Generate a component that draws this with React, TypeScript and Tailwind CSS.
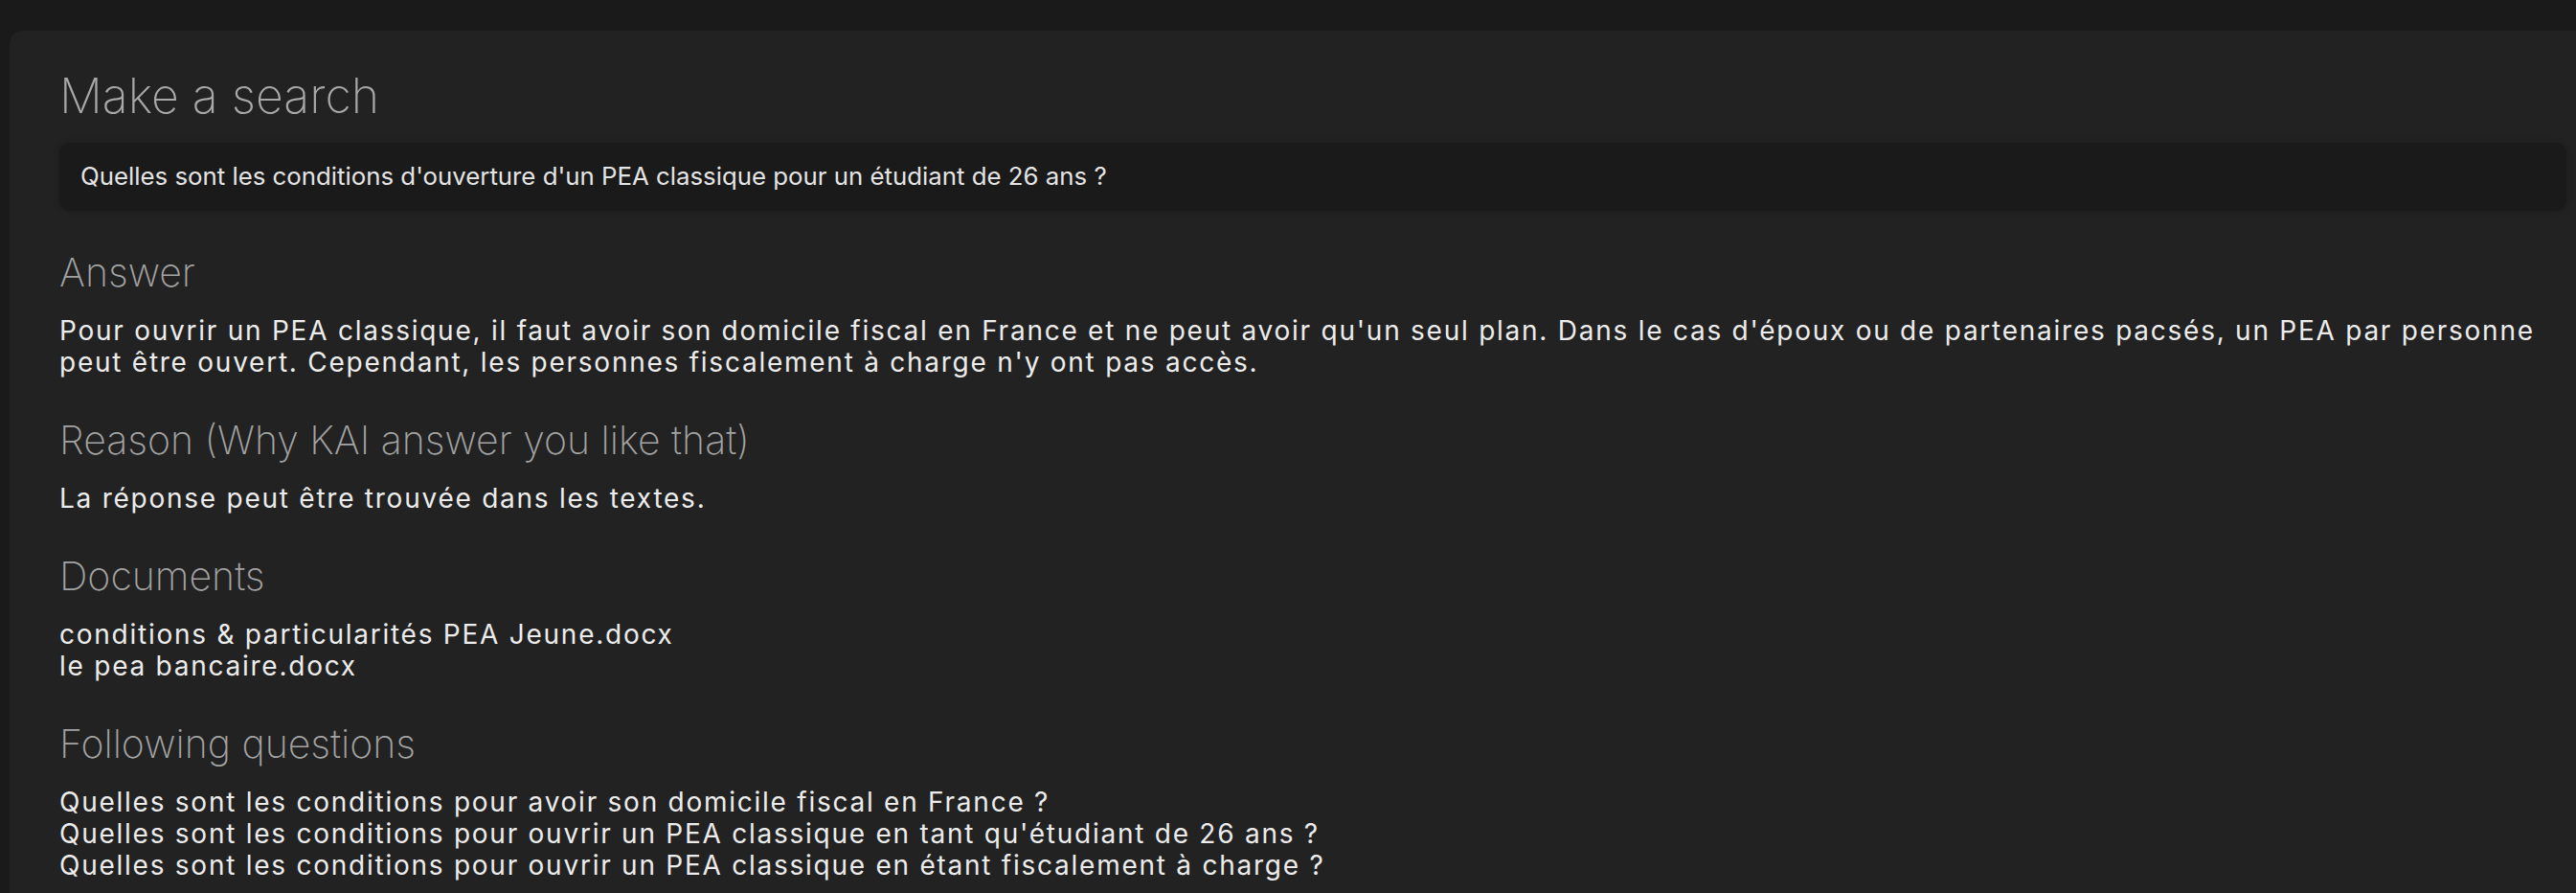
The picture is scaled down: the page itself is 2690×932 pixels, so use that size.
import React from "react"

const sans = "font-['Inter','Liberation_Sans',sans-serif]"

const answer =
  "Pour ouvrir un PEA classique, il faut avoir son domicile fiscal en France et ne peut avoir qu'un seul plan. Dans le cas d'époux ou de partenaires pacsés, un PEA par personne peut être ouvert. Cependant, les personnes fiscalement à charge n'y ont pas accès."

const documents = [
  "conditions & particularités PEA Jeune.docx",
  "le pea bancaire.docx",
]

const followingQuestions = [
  "Quelles sont les conditions pour avoir son domicile fiscal en France ?",
  "Quelles sont les conditions pour ouvrir un PEA classique en tant qu'étudiant de 26 ans ?",
  "Quelles sont les conditions pour ouvrir un PEA classique en étant fiscalement à charge ?",
]

function Section({ title, children }: { title: string; children: React.ReactNode }) {
  return (
    <section className="mt-[40px]">
      <h2 className="text-[41px] leading-[48px] font-extralight text-[#a3a3a3]">
        {title}
      </h2>
      <div className="mt-[21px] text-[28px] leading-[33px] tracking-[1.75px] text-[#ececec]">
        {children}
      </div>
    </section>
  )
}

export default function App() {
  return (
    <div className={`min-h-screen bg-[#1a1a1a] pt-[32px] ${sans}`}>
      <div className="ml-[10px] min-h-[900px] rounded-tl-[14px] bg-[#222222] pl-[52px] pr-[10px] pt-[38px]">
        <h1 className="text-[50px] leading-[60px] font-extralight text-[#a8a8a8]">
          Make a search
        </h1>

        {/* search box */}
        <div className="mt-[19px] flex h-[71px] items-center rounded-[12px] bg-[#1a1a1a] px-[22px] shadow-[0_0_6px_rgba(0,0,0,0.25)]">
          <span className="text-[25.8px] text-[#e4e4e4]">
            Quelles sont les conditions d'ouverture d'un PEA classique pour un étudiant de 26 ans ?
          </span>
        </div>

        <Section title="Answer">
          <p>{answer}</p>
        </Section>

        <Section title="Reason (Why KAI answer you like that)">
          <p>La réponse peut être trouvée dans les textes.</p>
        </Section>

        <Section title="Documents">
          {documents.map((d) => (
            <div key={d}>{d}</div>
          ))}
        </Section>

        <Section title="Following questions">
          {followingQuestions.map((q) => (
            <div key={q}>{q}</div>
          ))}
        </Section>
      </div>
    </div>
  )
}
